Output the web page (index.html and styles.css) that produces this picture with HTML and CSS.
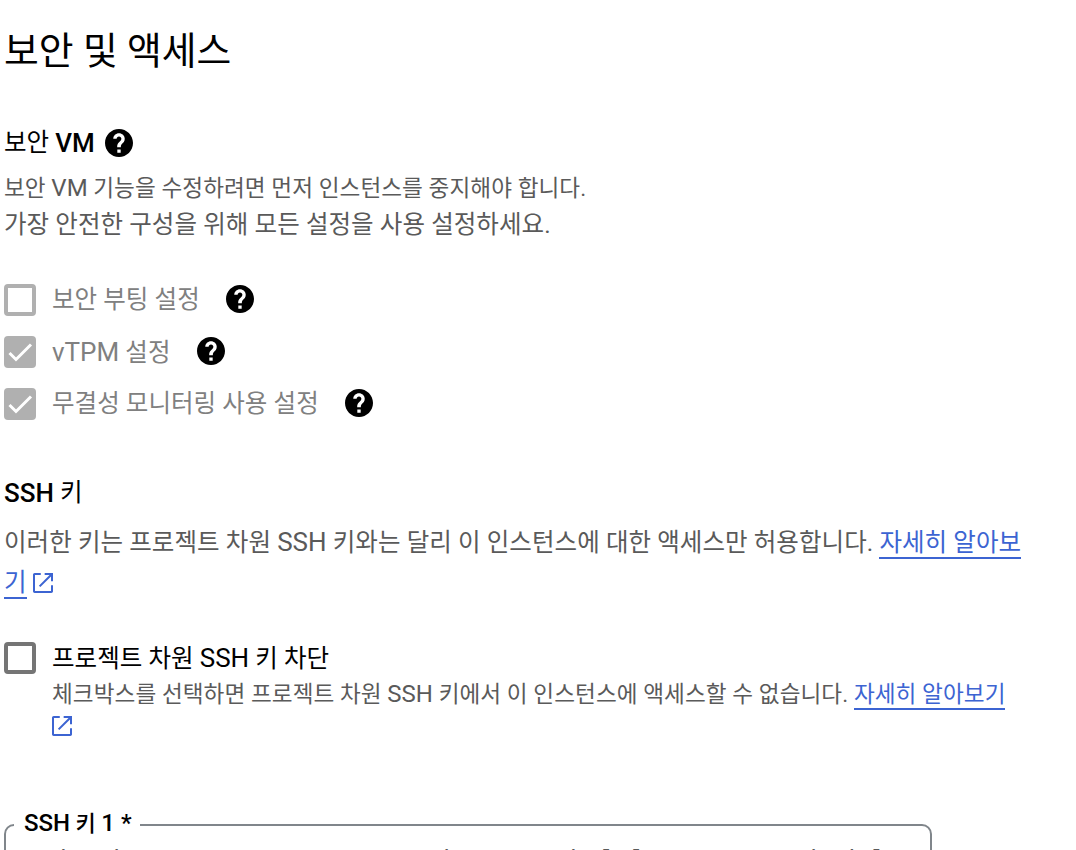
FILE: index.html
```
<!DOCTYPE html>
<html lang="ko">
<head>
    <meta charset="UTF-8">
    <meta name="viewport" content="width=device-width, initial-scale=1.0">
    <title>보안 및 액세스</title>
    <link rel="stylesheet" href="styles.css">
</head>
<body>
    <svg class="defs" aria-hidden="true">
        <symbol id="help" viewBox="2 2 20 20">
            <path d="M12 2C6.48 2 2 6.48 2 12s4.48 10 10 10 10-4.48 10-10S17.52 2 12 2zm1.2 17h-2.4v-2.4h2.4V19zm2.25-7.75l-.9.92c-.72.73-1.25 1.33-1.25 2.83h-2.6v-.5c0-1.1.45-2.1 1.17-2.83l1.24-1.26c.37-.36.59-.86.59-1.41 0-1-.7-1.7-1.7-1.7s-1.7.7-1.7 1.7H7.9C7.9 6.7 9.8 5 12 5s4.1 1.7 4.1 4c0 .88-.26 1.68-.65 2.25z"/>
        </symbol>
        <symbol id="open" viewBox="3 3 18 18">
            <path d="M19.2 19.2H4.8V4.8H10V3H4.5C3.7 3 3 3.7 3 4.5v15c0 .8.7 1.5 1.5 1.5h15c.8 0 1.5-.7 1.5-1.5V14h-1.8v5.2zM13.5 3v1.8h4.4L8.3 14.4l1.3 1.3 9.6-9.6v4.4H21V3h-7.5z"/>
        </symbol>
    </svg>

    <h1>보안 및 액세스</h1>

    <section class="vm">
        <h2>보안 <b>VM</b><svg class="help"><use href="#help"/></svg></h2>
        <p class="hint">보안 <b>VM</b> 기능을 수정하려면 먼저 인스턴스를 중지해야 합니다.</p>
        <p class="desc">가장 안전한 구성을 위해 모든 설정을 사용 설정하세요.</p>
        <div class="options">
            <div class="option">
                <span class="box"></span>
                <span class="label">보안 부팅 설정</span>
                <svg class="help"><use href="#help"/></svg>
            </div>
            <div class="option">
                <span class="box checked"><svg viewBox="0 0 32 32"><path d="M5.5 17l6.5 6.5L27 8.5"/></svg></span>
                <span class="label"><b>vTPM</b> 설정</span>
                <svg class="help"><use href="#help"/></svg>
            </div>
            <div class="option">
                <span class="box checked"><svg viewBox="0 0 32 32"><path d="M5.5 17l6.5 6.5L27 8.5"/></svg></span>
                <span class="label">무결성 모니터링 사용 설정</span>
                <svg class="help"><use href="#help"/></svg>
            </div>
        </div>
    </section>

    <section class="ssh">
        <h2><b>SSH</b> 키</h2>
        <p class="desc">이러한 키는 프로젝트 차원 <b>SSH</b> 키와는 달리 이 인스턴스에 대한 액세스만 허용합니다. <a>자세히 알아보<br>기</a><svg class="open"><use href="#open"/></svg></p>
        <div class="block-keys">
            <span class="box"></span>
            <div class="block-text">
                <div class="label">프로젝트 차원 <b>SSH</b> 키 차단</div>
                <p class="hint">체크박스를 선택하면 프로젝트 차원 <b>SSH</b> 키에서 이 인스턴스에 액세스할 수 없습니다. <a>자세히 알아보기</a></p>
                <svg class="open"><use href="#open"/></svg>
            </div>
        </div>
        <fieldset>
            <legend><b>SSH</b> 키 <b>1 *</b></legend>
            <div class="value">ssh-ed25519 AAAAC3NzaC1ZDI1dNTE5AAAAhElAlMzQ2Nz5OTEybMdQlNz</div>
        </fieldset>
    </section>
</body>
</html>
```
FILE: styles.css
```
* {
    box-sizing: border-box;
}
html {
    overflow: hidden;
}
body {
    font-family: Roboto, "Noto Sans CJK KR", sans-serif;
    margin: 0;
    padding: 25px 4px 0;
    height: 850px;
    overflow: hidden;
    background-color: #fff;
    color: #000;
    white-space: nowrap;
}
.defs {
    display: none;
}
h1, h2, p {
    margin: 0;
    font-weight: 400;
}
b {
    font-weight: inherit;
    letter-spacing: 0;
}
h1 {
    font-size: 37.8px;
    line-height: 52px;
}
h2 {
    display: flex;
    align-items: center;
    font-size: 24.5px;
    line-height: 36px;
    white-space: pre;
}
h2 b {
    font-size: 26px;
    font-weight: 500;
}
.vm h2 {
    margin-top: 48px;
}
.help {
    width: 28px;
    height: 28px;
    fill: #000;
    flex: none;
}
h2 .help {
    margin-left: 10.5px;
}
.hint {
    font-size: 22.6px;
    line-height: 36px;
    letter-spacing: 0.06px;
    color: #5a5a5a;
}
.hint b {
    font-size: 24px;
}
.desc {
    font-size: 24.5px;
    line-height: 36px;
    letter-spacing: 0.06px;
    color: #5a5a5a;
}
.desc b, .label b {
    font-size: 26px;
}
.vm .hint {
    margin-top: 9px;
}
.options {
    margin-top: 31px;
}
.option {
    display: flex;
    align-items: center;
    height: 52px;
    color: #808080;
}
.box {
    width: 32px;
    height: 32px;
    flex: none;
    margin-right: 16px;
    border: 4px solid #b0b0b0;
    border-radius: 4px;
}
.checked {
    border: none;
    background-color: #b0b0b0;
}
.checked svg {
    display: block;
    width: 32px;
    height: 32px;
    fill: none;
    stroke: #fff;
    stroke-width: 3;
}
.label {
    font-size: 24.5px;
    line-height: 32px;
    letter-spacing: 0.04px;
}
.option .help {
    margin: 0 0 2px 26.5px;
}
.ssh {
    margin-top: 45px;
}
.ssh .desc {
    line-height: 40px;
    margin-top: 11px;
}
a {
    color: #3c64d2;
    border-bottom: 2px solid #3c64d2;
}
.open {
    width: 20px;
    height: 20px;
    fill: #3c64d2;
}
.desc .open {
    margin-left: 6px;
    vertical-align: -2px;
}
.block-keys {
    display: flex;
    margin-top: 39px;
}
.block-keys .box {
    border-color: #757575;
}
.block-text .hint {
    line-height: 34px;
    margin-top: 2px;
}
.block-text .open {
    display: block;
    margin-top: 4px;
}
fieldset {
    width: 928px;
    min-width: 0;
    height: 100px;
    margin: 73px 0 0;
    padding: 0 24px;
    border: 2px solid #80868b;
    border-radius: 10px;
}
legend {
    margin-left: -16px;
    padding: 0 8px 2px 10px;
    font-size: 22px;
    font-weight: 500;
    line-height: 28px;
}
legend b {
    font-size: 24px;
}
.value {
    margin-top: 4px;
    font-family: "Liberation Mono", monospace;
    font-size: 25px;
    line-height: 36px;
    color: #5a5a5a;
}
```
